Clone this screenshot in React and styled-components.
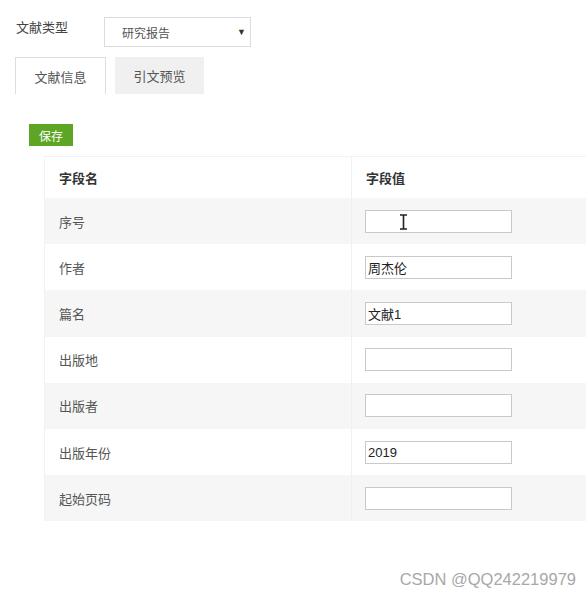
import React from "react";
import styled, { createGlobalStyle } from "styled-components";

const Global = createGlobalStyle`
  html, body { margin: 0; padding: 0; background: #fff; overflow: hidden; }
  body { font-family: "Liberation Sans", "Noto Sans CJK SC", sans-serif; }
`;

const Page = styled.div`
  position: relative;
  width: 586px;
  height: 598px;
  overflow: hidden;
  padding: 17px 0 0 15px;
  box-sizing: border-box;
`;

const TypeRow = styled.div`
  display: flex;
  align-items: flex-start;
`;

const TypeLabel = styled.div`
  width: 88px;
  padding: 2px 0 0 1px;
  font-size: 13px;
  line-height: 17px;
  color: #444;
`;

const Select = styled.div`
  width: 147px;
  height: 30px;
  box-sizing: border-box;
  border: 1px solid #dcdcdc;
  display: flex;
  align-items: center;
  justify-content: space-between;
  padding: 0 4px 0 17px;
  font-size: 12px;
  color: #555;
`;

const Arrow = styled.span`
  font-size: 9px;
  color: #333;
`;

const Tabs = styled.div`
  display: flex;
  gap: 9px;
  margin-top: 10px;
`;

const Tab = styled.div`
  width: ${(p) => p.$w}px;
  height: 37px;
  box-sizing: border-box;
  display: flex;
  align-items: center;
  justify-content: center;
  font-size: 13px;
  color: #555;
  background: ${(p) => (p.$active ? "#fff" : "#f0f0f0")};
  border: ${(p) => (p.$active ? "1px solid #dedede" : "none")};
  border-bottom: none;
`;

const SaveButton = styled.button`
  margin: 30px 0 0 14px;
  width: 44px;
  height: 22px;
  border: none;
  background: #5ea526;
  color: #fff;
  font-family: inherit;
  font-size: 12px;
  padding: 0;
  display: block;
`;

const Table = styled.div`
  margin: 10px 0 0 29px;
  width: 560px;
  border-top: 1px solid #f2f2f2;
  border-left: 1px solid #f2f2f2;
`;

const Row = styled.div`
  display: grid;
  grid-template-columns: 306px 1fr;
  height: ${(p) => (p.$head ? 41 : 46.2)}px;
  background: ${(p) => (p.$alt ? "#f6f6f6" : "#fff")};
  font-weight: ${(p) => (p.$head ? "bold" : "normal")};
  color: ${(p) => (p.$head ? "#333" : "#555")};
`;

const Cell = styled.div`
  display: flex;
  align-items: center;
  padding-left: ${(p) => p.$pad}px;
  font-size: 13px;
  border-left: ${(p) => (p.$divider ? "1px solid #f0f0f0" : "none")};
`;

const Field = styled.div`
  position: relative;
  width: 147px;
  height: 23px;
  box-sizing: border-box;
  border: 1px solid #c9c9c9;
  background: #fff;
  display: flex;
  align-items: center;
  padding-left: 2px;
  font-size: 13px;
  color: #222;
`;

const Cursor = styled.svg`
  position: absolute;
  left: 33px;
  top: 3px;
`;

const Watermark = styled.div`
  position: absolute;
  right: 10px;
  bottom: 9px;
  font-size: 16.5px;
  color: #a8a8a8;
`;

const rows = [
  ["序号", "", true],
  ["作者", "周杰伦"],
  ["篇名", "文献1"],
  ["出版地", ""],
  ["出版者", ""],
  ["出版年份", "2019"],
  ["起始页码", ""],
];

export default function App() {
  return (
    <Page>
      <Global />
      <TypeRow>
        <TypeLabel>文献类型</TypeLabel>
        <Select>
          <span>研究报告</span>
          <Arrow>▼</Arrow>
        </Select>
      </TypeRow>
      <Tabs>
        <Tab $active $w={91}>文献信息</Tab>
        <Tab $w={89}>引文预览</Tab>
      </Tabs>
      <SaveButton>保存</SaveButton>
      <Table>
        <Row $head>
          <Cell $pad={14}>字段名</Cell>
          <Cell $pad={14} $divider>字段值</Cell>
        </Row>
        {rows.map(([name, value, cursor], i) => (
          <Row key={name} $alt={i % 2 === 0}>
            <Cell $pad={14}>{name}</Cell>
            <Cell $pad={13} $divider>
              <Field>
                {value}
                {cursor && (
                  <Cursor width="9" height="16" viewBox="0 0 9 16">
                    <path d="M1 1h7M4.5 1v14M1 15h7" stroke="#222" strokeWidth="1.6" fill="none" />
                  </Cursor>
                )}
              </Field>
            </Cell>
          </Row>
        ))}
      </Table>
      <Watermark>CSDN @QQ242219979</Watermark>
    </Page>
  );
}
